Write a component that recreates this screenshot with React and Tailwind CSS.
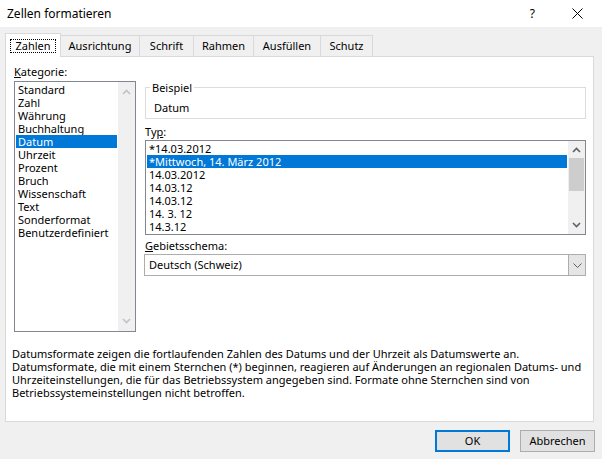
import { useState } from "react";

const categories = [
  "Standard",
  "Zahl",
  "Währung",
  "Buchhaltung",
  "Datum",
  "Uhrzeit",
  "Prozent",
  "Bruch",
  "Wissenschaft",
  "Text",
  "Sonderformat",
  "Benutzerdefiniert",
];

const types = [
  "*14.03.2012",
  "*Mittwoch, 14. März 2012",
  "14.03.2012",
  "14.03.12",
  "14.03.12",
  "14. 3. 12",
  "14.3.12",
];

const tabs = [
  { label: "Zahlen", w: "w-[56px]" },
  { label: "Ausrichtung", w: "w-[80px]" },
  { label: "Schrift", w: "w-[55px]" },
  { label: "Rahmen", w: "w-[61px]" },
  { label: "Ausfüllen", w: "w-[68px]" },
  { label: "Schutz", w: "w-[53px]" },
];

const Chevron = ({ up, color }) => (
  <svg width="9" height="6" viewBox="0 0 9 6" fill="none">
    <polyline
      points={up ? "1,5 4.5,1.5 8,5" : "1,1 4.5,4.5 8,1"}
      stroke={color}
      strokeWidth="1.6"
    />
  </svg>
);

const App = () => {
  const [category, setCategory] = useState(4);
  const [type, setType] = useState(1);

  return (
    <div className="w-[602px] h-[459px] bg-[#f0f0f0] flex flex-col overflow-hidden text-black text-[11px] font-['Segoe_UI','Noto_Sans',sans-serif]">
      {/* title bar */}
      <div className="h-[27px] shrink-0 bg-white flex items-center">
        <span className="ml-[7px] text-[12px]">Zellen formatieren</span>
        <span className="ml-auto mr-[37px] text-[12px]">?</span>
        <svg width="11" height="11" viewBox="0 0 11 11" className="mr-[19px]">
          <path d="M0.5 0.5 L10.5 10.5 M10.5 0.5 L0.5 10.5" stroke="#000" strokeWidth="1" />
        </svg>
      </div>

      {/* tabs */}
      <div className="h-[29px] shrink-0 flex items-end pl-[5px]">
        {tabs.map((t, i) =>
          i === 0 ? (
            <div
              key={t.label}
              className={`${t.w} relative z-10 h-[24px] -mb-px bg-white border border-b-0 border-[#d9d9d9] flex items-start justify-center pt-[6px]`}
            >
              <span className="px-[4px] leading-[12px] outline outline-1 outline-dotted outline-black">
                {t.label}
              </span>
            </div>
          ) : (
            <div
              key={t.label}
              className={`${t.w} -ml-px h-[21px] bg-[#f0f0f0] border border-b-0 border-[#d9d9d9] flex items-center justify-center`}
            >
              {t.label}
            </div>
          )
        )}
      </div>

      {/* panel */}
      <div className="ml-[5px] w-[589px] h-[366px] shrink-0 bg-white border border-[#d9d9d9] flex flex-col">
        <div className="flex gap-[9px] pl-[8px] pr-[7px] pt-[8px]">
          {/* Kategorie */}
          <div className="w-[122px] flex flex-col">
            <div className="h-[13px] leading-[13px]">
              <span className="underline">K</span>ategorie:
            </div>
            <div className="mt-[3px] h-[251px] border border-[#828790] flex">
              <div className="flex-1 p-[1px] flex flex-col">
                {categories.map((c, i) => (
                  <div
                    key={c}
                    onClick={() => setCategory(i)}
                    className={`h-[13px] leading-[13px] pl-[2px] ${
                      i === category ? "bg-[#0078d7] text-white" : ""
                    }`}
                  >
                    {c}
                  </div>
                ))}
              </div>
              <div className="w-[17px] bg-[#f0f0f0] flex flex-col items-center justify-between py-[7px]">
                <Chevron up color="#c2c2c2" />
                <Chevron color="#c2c2c2" />
              </div>
            </div>
          </div>

          {/* right column */}
          <div className="w-[441px] flex flex-col">
            <fieldset className="mt-[16px] h-[38px] border border-[#dcdcdc]">
              <legend className="ml-[4px] px-[2px] leading-[13px]">Beispiel</legend>
              <div className="pl-[8px] pt-[7px] leading-[13px]">Datum</div>
            </fieldset>

            <div className="mt-[6px] h-[13px] leading-[13px]">
              Ty<span className="underline">p</span>:
            </div>
            <div className="mt-[2px] h-[95px] border border-[#828790] flex">
              <div className="flex-1 p-[1px] flex flex-col">
                {types.map((t, i) => (
                  <div
                    key={i}
                    onClick={() => setType(i)}
                    className={`h-[13px] leading-[13px] pl-[2px] ${
                      i === type ? "bg-[#0078d7] text-white" : ""
                    }`}
                  >
                    {t}
                  </div>
                ))}
              </div>
              <div className="w-[17px] bg-[#f0f0f0] flex flex-col items-center">
                <div className="h-[17px] flex items-center justify-center">
                  <Chevron up color="#606060" />
                </div>
                <div className="w-[15px] h-[33px] bg-[#cdcdcd]" />
                <div className="flex-1 flex items-end justify-center pb-[6px]">
                  <Chevron color="#606060" />
                </div>
              </div>
            </div>

            <div className="mt-[4px] h-[13px] leading-[13px]">
              <span className="underline">G</span>ebietsschema:
            </div>
            <div className="mt-[2px] -ml-px w-[442px] h-[22px] border border-[#adadad] flex items-stretch">
              <div className="flex-1 pl-[4px] flex items-center">Deutsch (Schweiz)</div>
              <div className="w-[17px] bg-[#e5e5e5] border-l border-[#adadad] flex items-center justify-center">
                <svg width="9" height="5" viewBox="0 0 9 5" fill="none">
                  <polyline points="0.5,0.5 4.5,4.5 8.5,0.5" stroke="#606060" strokeWidth="1" />
                </svg>
              </div>
            </div>
          </div>
        </div>

        <p className="mt-[15px] pl-[6px] pr-[10px] leading-[13px]">
          Datumsformate zeigen die fortlaufenden Zahlen des Datums und der Uhrzeit als Datumswerte an.
          <br />
          Datumsformate, die mit einem Sternchen (*) beginnen, reagieren auf Änderungen an regionalen Datums- und
          <br />
          Uhrzeiteinstellungen, die für das Betriebssystem angegeben sind. Formate ohne Sternchen sind von
          <br />
          Betriebssystemeinstellungen nicht betroffen.
        </p>
      </div>

      {/* buttons */}
      <div className="flex justify-end gap-[10px] pr-[7px] mt-[8px]">
        <button className="w-[75px] h-[22px] bg-[#e1e1e1] border-2 border-[#0078d7] flex items-center justify-center">
          OK
        </button>
        <button className="w-[75px] h-[22px] bg-[#e1e1e1] border border-[#adadad] flex items-center justify-center">
          Abbrechen
        </button>
      </div>
    </div>
  );
};

export default App;
